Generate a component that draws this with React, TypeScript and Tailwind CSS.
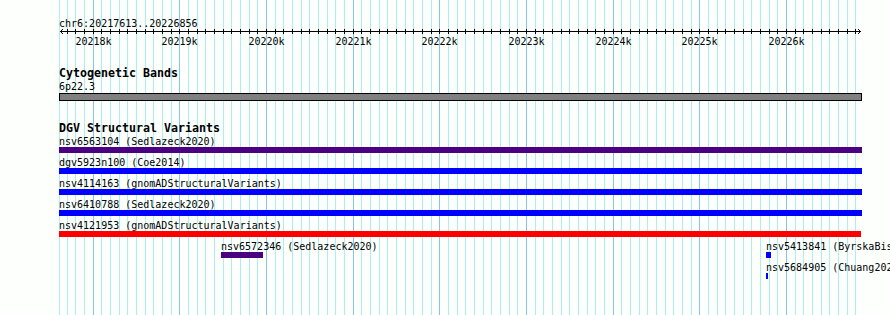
const VIEW_START = 20217613;
const VIEW_END = 20226856;
const ORIGIN = 59; // left edge of the drawing area

// x position (absolute) of the n-th 100bp grid line, n = 0 at 20217600
const gridX = (n: number) => Math.max(59, Math.round(92.6 + (n - 4) * 8.6675));

const GRID_LINES = Array.from({ length: 93 }, (_, n) => n);
const MAJOR_LABELS = [4, 14, 24, 34, 44, 54, 64, 74, 84].map((n) => ({
  n,
  label: `${20218 + (n - 4) / 10}k`,
}));

const FULL_TRACKS = [
  { name: 'nsv6563104', source: 'Sedlazeck2020', color: 'bg-[#4b0082]', width: 803 },
  { name: 'dgv5923n100', source: 'Coe2014', color: 'bg-[#0000ff]', width: 803 },
  { name: 'nsv4114163', source: 'gnomADStructuralVariants', color: 'bg-[#0000ff]', width: 803 },
  { name: 'nsv6410788', source: 'Sedlazeck2020', color: 'bg-[#0000ff]', width: 803 },
  { name: 'nsv4121953', source: 'gnomADStructuralVariants', color: 'bg-[#ff0000]', width: 802 },
];

const PACKED_ROWS = [
  [
    { name: 'nsv6572346', source: 'Sedlazeck2020', color: 'bg-[#4b0082]', x: 221, width: 42 },
    { name: 'nsv5413841', source: 'ByrskaBishop2022', color: 'bg-[#0000ff]', x: 766, width: 5 },
  ],
  [{ name: 'nsv5684905', source: 'Chuang2023', color: 'bg-[#0000ff]', x: 766, width: 2 }],
];

function Grid() {
  return (
    <svg className="absolute inset-0" width={890} height={315} shapeRendering="crispEdges">
      {GRID_LINES.map((n) => {
        const x = gridX(n) + 0.5;
        const major = n % 10 === 4;
        return (
          <line key={n} x1={x} x2={x} y1={0} y2={315} stroke={major ? '#87c3ea' : '#afeeee'} strokeWidth={1} />
        );
      })}
    </svg>
  );
}

function Ruler() {
  return (
    <div className="relative h-[19px] -ml-[59px] w-[890px]">
      <svg className="absolute left-0 top-0" width={890} height={8} shapeRendering="crispEdges">
        <line x1={60} x2={861} y1={2.5} y2={2.5} stroke="#000" />
        {GRID_LINES.filter((n) => n > 0).map((n) => (
          <line key={n} x1={gridX(n) + 0.5} x2={gridX(n) + 0.5} y1={0} y2={5} stroke="#000" />
        ))}
        <polyline points="63.5,-0.5 60.5,2.5 63.5,5.5" fill="none" stroke="#000" />
        <polyline points="857.5,-0.5 860.5,2.5 857.5,5.5" fill="none" stroke="#000" />
      </svg>
      {MAJOR_LABELS.map(({ n, label }) => (
        <span
          key={n}
          className="absolute top-[6px] h-[13px] leading-[13px] w-[36px] text-center"
          style={{ left: gridX(n) - 17.5 }}
        >
          {label}
        </span>
      ))}
    </div>
  );
}

export default function App() {
  return (
    <div className="relative w-[890px] h-[315px] overflow-hidden bg-[#fdfffd] text-black text-[10px] font-['DejaVu_Sans_Mono','Liberation_Mono',monospace] whitespace-nowrap">
      <Grid />
      <div className="relative flex flex-col pl-[59px] pt-[17px]">
        <div className="h-[12px] leading-[13px]">
          chr6:{VIEW_START}..{VIEW_END}
        </div>
        <Ruler />

        <div className="mt-[19px] h-[13px] leading-[13px] text-[11.63px] font-bold">Cytogenetic Bands</div>
        <div className="h-[13px] leading-[13px]">6p22.3</div>
        <div className="h-[8px] w-[803px] border border-black bg-[#808080]" />

        <div className="mt-[21px] h-[13px] leading-[13px] text-[11.63px] font-bold">DGV Structural Variants</div>
        <div className="flex flex-col gap-[3px]">
          {FULL_TRACKS.map((t) => (
            <div key={t.name} className="flex flex-col">
              <div className="h-[12px] leading-[13px]">
                {t.name} ({t.source})
              </div>
              <div className={`h-[6px] ${t.color}`} style={{ width: t.width }} />
            </div>
          ))}
          {PACKED_ROWS.map((row, i) => (
            <div key={i} className="relative h-[18px]">
              {row.map((f) => (
                <div key={f.name} className="absolute top-0 flex flex-col" style={{ left: f.x - ORIGIN }}>
                  <div className="h-[12px] leading-[13px]">
                    {f.name} ({f.source})
                  </div>
                  <div className={`h-[6px] ${f.color}`} style={{ width: f.width }} />
                </div>
              ))}
            </div>
          ))}
        </div>
      </div>
    </div>
  );
}
